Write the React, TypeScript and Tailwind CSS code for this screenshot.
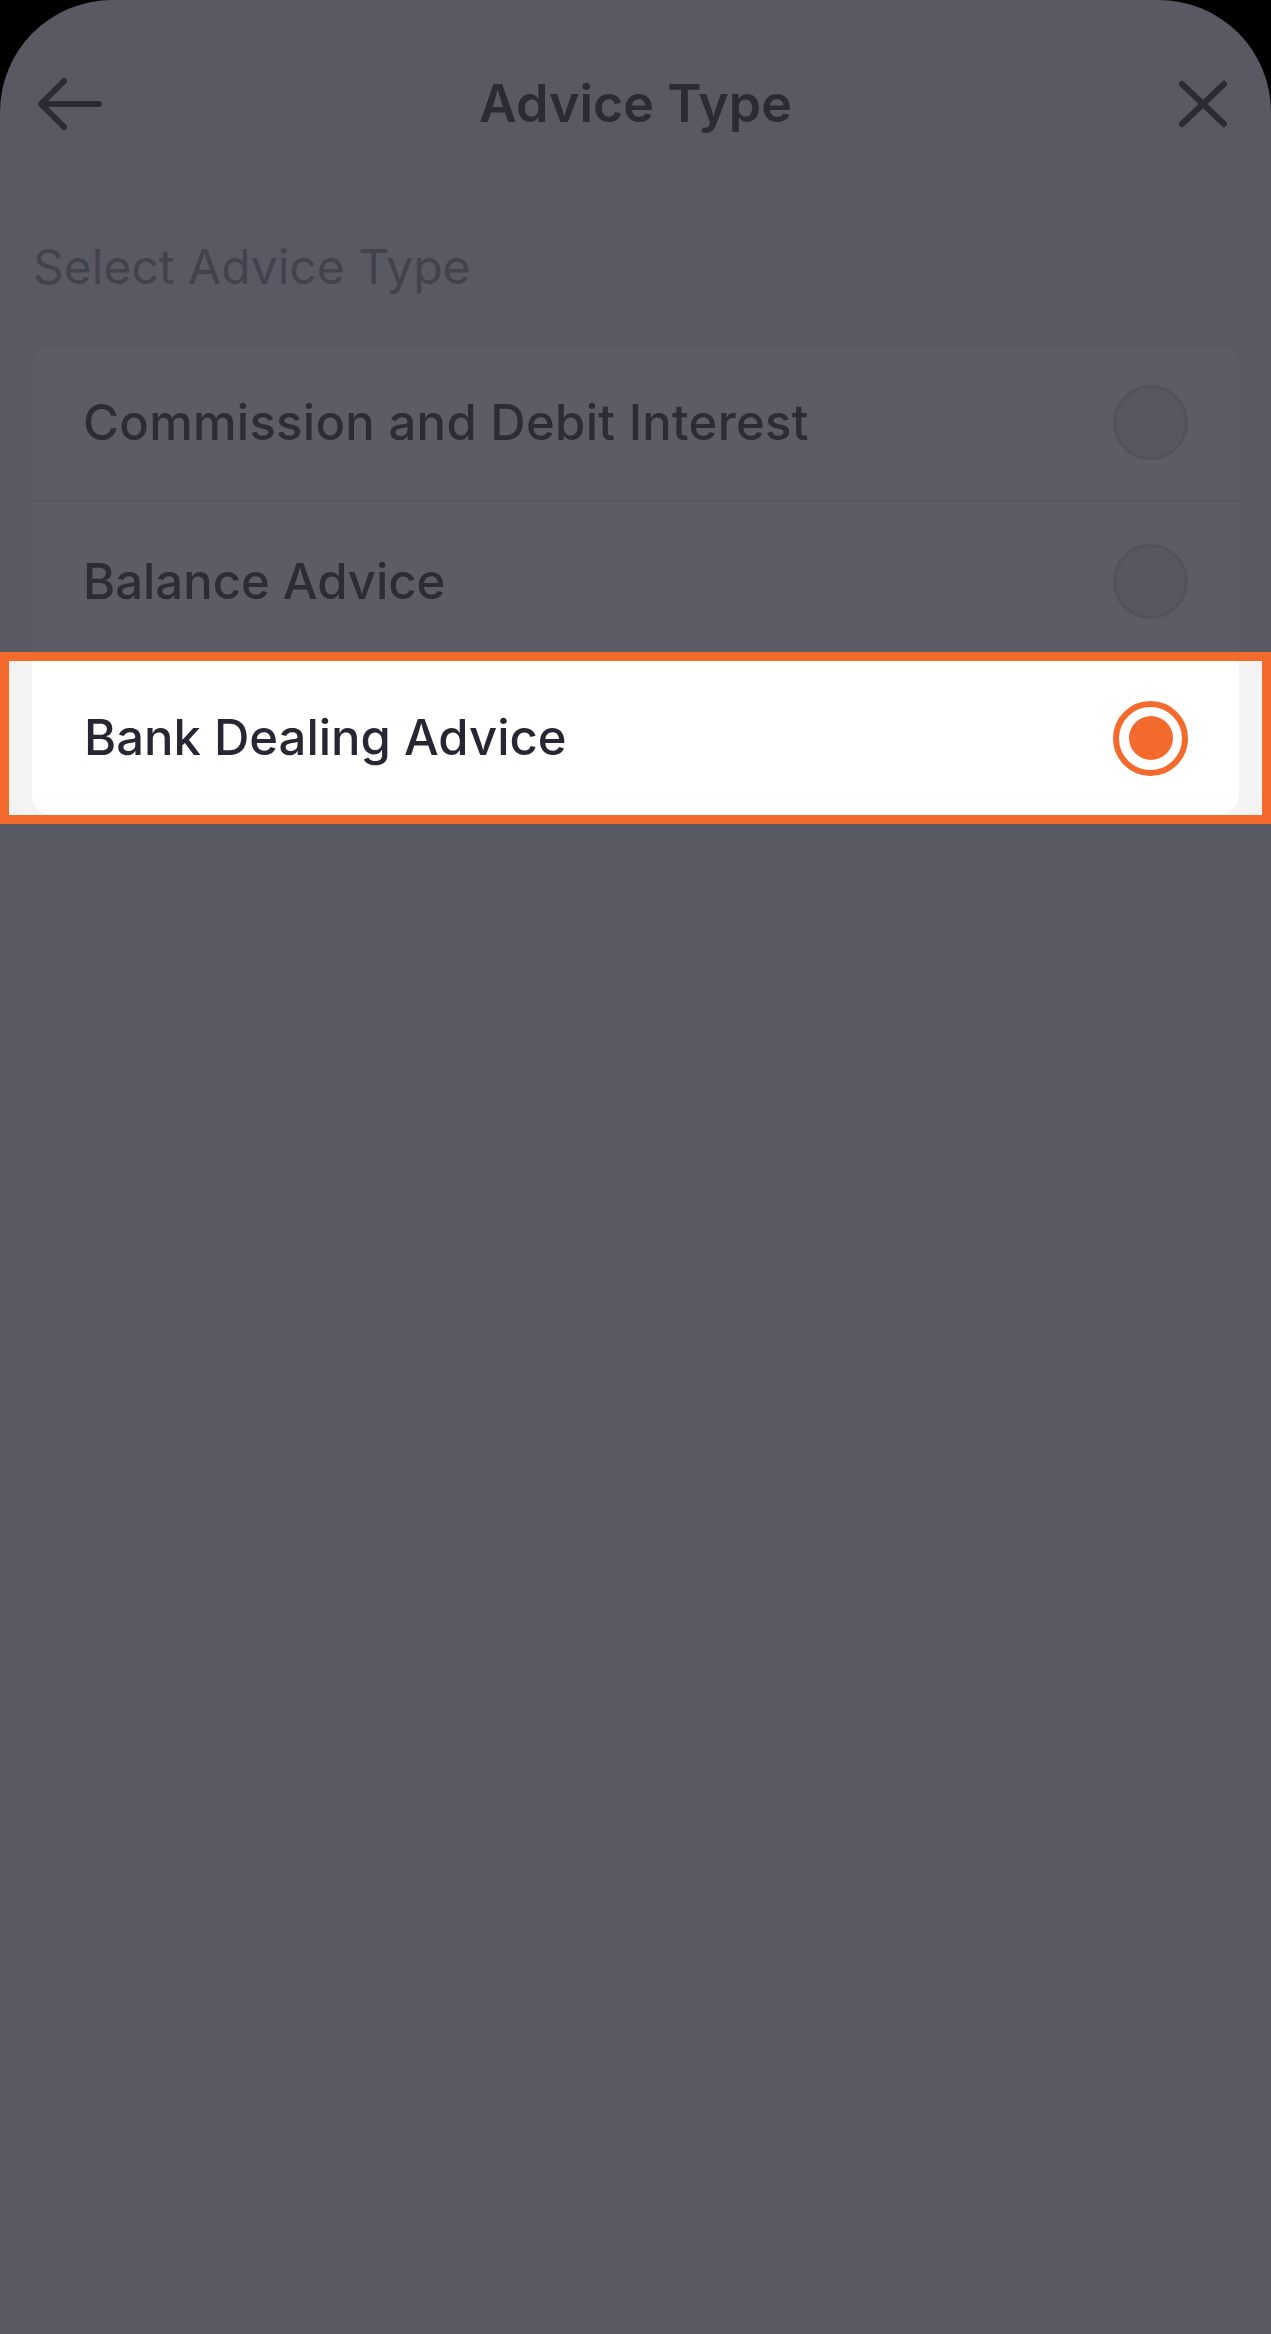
import React from "react";

const font = { fontFamily: "Inter, 'Liberation Sans', sans-serif" };

function BackArrow() {
  return (
    <svg width="66" height="52" viewBox="0 0 66 52" fill="none">
      <path
        d="M62 26H5M27 3L4 26L27 49"
        stroke="#2b2b36"
        strokeWidth="6"
        strokeLinecap="round"
        strokeLinejoin="round"
      />
    </svg>
  );
}

function CloseIcon() {
  return (
    <svg width="50" height="48" viewBox="0 0 50 48" fill="none">
      <path
        d="M4 4L46 44M46 4L4 44"
        stroke="#2b2b36"
        strokeWidth="6"
        strokeLinecap="round"
      />
    </svg>
  );
}

function Radio({ checked }: { checked?: boolean }) {
  if (checked) {
    return (
      <div className="flex h-[75px] w-[75px] items-center justify-center rounded-full border-[6px] border-[#f36a2c] bg-white">
        <div className="h-[44px] w-[44px] rounded-full bg-[#f36a2c]" />
      </div>
    );
  }
  return <div className="h-[75px] w-[75px] rounded-full border-[3px] border-[#52525c] bg-[#575762]" />;
}

export default function App() {
  return (
    <div className="min-h-[2334px] w-full bg-black" style={font}>
      <div className="flex min-h-[2334px] flex-col rounded-t-[112px] bg-[#595964]">
        {/* header */}
        <div className="grid h-[185px] grid-cols-[1fr_auto_1fr] items-center border-b-2 border-[#54545e] px-[37px] pt-[24px]">
          <div className="flex justify-start">
            <BackArrow />
          </div>
          <h1 className="text-[52px] font-semibold leading-none text-[#2b2b36]">Advice Type</h1>
          <div className="flex justify-end pr-[6px]">
            <CloseIcon />
          </div>
        </div>

        <p className="mt-[52px] px-[33px] text-[48px] leading-[60px] text-[#42424d]">Select Advice Type</p>

        {/* list */}
        <div className="mx-[32px] mt-[48px] rounded-t-[20px] bg-[#5c5c67]">
          <div className="flex h-[157px] items-center justify-between border-b-2 border-[#555560] pl-[51px] pr-[51px]">
            <span className="text-[49px] font-medium tracking-[0.3px] text-[#2c2c37]">Commission and Debit Interest</span>
            <Radio />
          </div>
          <div className="flex h-[159px] items-center justify-between pl-[51px] pr-[51px]">
            <span className="text-[49px] font-medium text-[#2c2c37]">Balance Advice</span>
            <Radio />
          </div>
        </div>

        {/* highlighted row */}
        <div className="relative -mt-[9px] border-[9px] border-[#f36a2c] bg-[#f3f3f4] px-[23px]">
          <div className="flex h-[154px] items-center justify-between rounded-b-[20px] bg-white pl-[52px] pr-[51px]">
            <span className="text-[49px] font-medium text-[#272734]">Bank Dealing Advice</span>
            <Radio checked />
          </div>
        </div>
      </div>
    </div>
  );
}
